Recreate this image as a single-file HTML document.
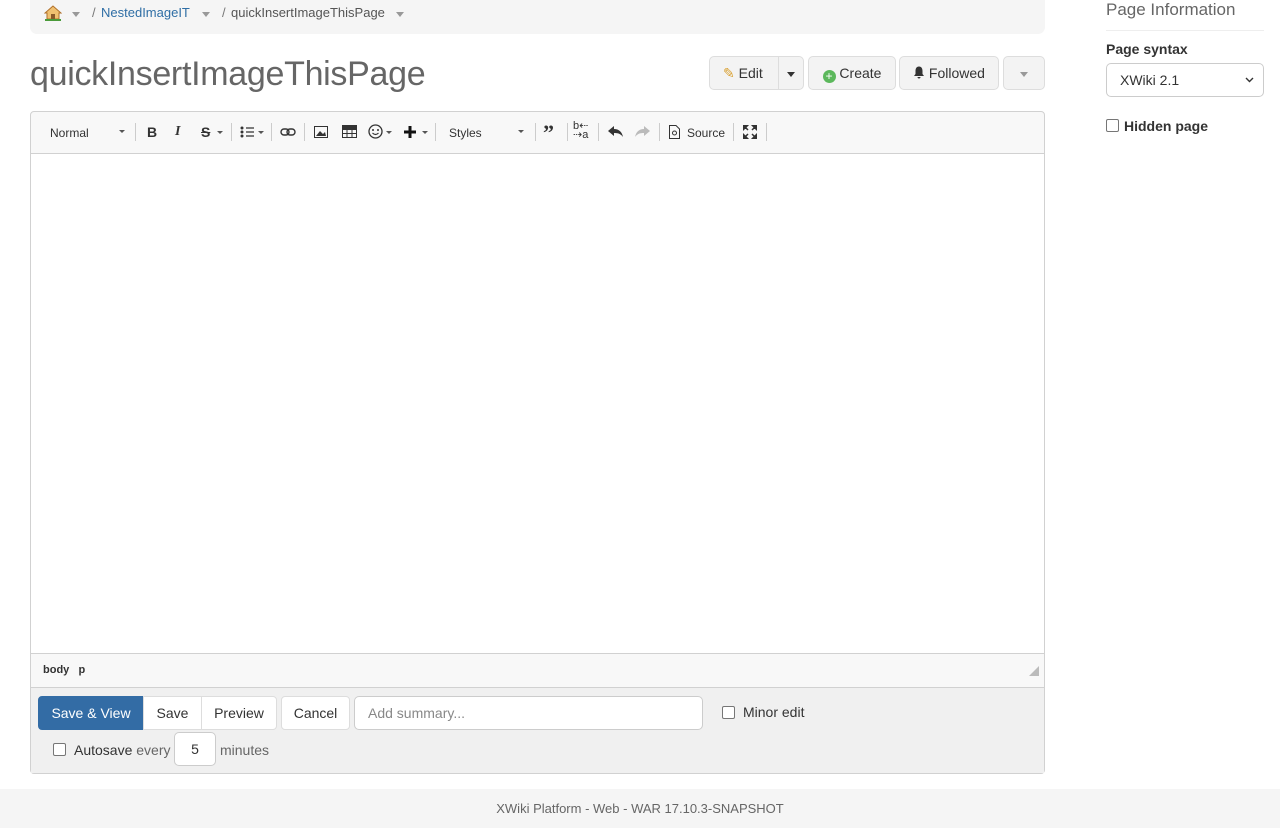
<!DOCTYPE html>
<html><head><meta charset="utf-8"><style>
*{box-sizing:border-box}
body{margin:0;width:1280px;height:828px;background:#fff;font-family:"Liberation Sans",sans-serif;color:#333;position:relative;overflow:hidden}
.a{position:absolute}
.crumb{left:30px;top:-4px;width:1015px;height:38px;background:#f5f5f5;border-radius:0 0 7px 7px;font-size:13px}
.caret{display:inline-block;width:0;height:0;border-left:4px solid transparent;border-right:4px solid transparent;border-top:5px solid #999}
.btn{position:absolute;top:56px;height:34px;border:1px solid #ddd;border-radius:5px;background:#f3f3f3;font-size:14px;line-height:32px;color:#333;text-align:center}
.tb{left:30px;top:111px;width:1015px;height:663px;border:1px solid #d1d1d1;border-radius:4px;background:#f8f8f8}
.sep{position:absolute;top:123px;width:1px;height:18px;background:#ccc}
.ti{position:absolute;top:124px;font-size:14px;color:#333}
.fb{position:absolute;top:696px;height:34px;border:1px solid #ddd;background:#fff;font-size:14px;line-height:32px;text-align:center;color:#333}
.cb{position:absolute;width:13px;height:13px;border:1px solid #767676;border-radius:2px;background:#fff}
</style></head><body>
<div class="a crumb">
 <svg class="a" style="left:14px;top:9px" width="18" height="16" viewBox="0 0 18 16"><path d="M9 1 L1 8 H3 V14 H15 V8 H17 Z" fill="#f0c070" stroke="#b0702a"/><rect x="7" y="9" width="4" height="5" fill="#8a5a2a"/><rect x="1" y="14" width="16" height="2" fill="#4a9a3a"/></svg>
 <span class="a caret" style="left:42px;top:16px"></span>
 <span class="a" style="left:62px;top:9px;color:#777">/</span>
 <span class="a" style="left:71px;top:9px;color:#2f6ea5">NestedImageIT</span>
 <span class="a caret" style="left:172px;top:16px"></span>
 <span class="a" style="left:192px;top:9px;color:#777">/</span>
 <span class="a" style="left:201px;top:9px;color:#555">quickInsertImageThisPage</span>
 <span class="a caret" style="left:366px;top:16px"></span>
</div>
<div class="a" style="left:30px;top:55px;font-size:34px;color:#666;letter-spacing:-0.3px">quickInsertImageThisPage</div>
<div class="btn" style="left:709px;width:95px;text-align:left;padding-left:13px"><span style="color:#d9a030">✎</span> Edit<span class="a" style="left:68px;top:-1px;width:1px;height:34px;background:#ddd"></span><span class="a caret" style="left:77px;top:15px;border-top-color:#333"></span></div>
<div class="btn" style="left:808px;width:88px"><span style="display:inline-block;width:13px;height:13px;border-radius:50%;background:#5cb85c;color:#fff;font-size:12px;line-height:13px;vertical-align:-2px">+</span> Create</div>
<div class="btn" style="left:899px;width:100px"><svg width="12" height="13" viewBox="0 0 12 13" style="vertical-align:-1px"><path d="M6 0.5C3.5 0.5 2.5 2.5 2.5 5V8L1 10H11L9.5 8V5C9.5 2.5 8.5 0.5 6 0.5Z M4.5 11H7.5A1.5 1.5 0 0 1 4.5 11Z" fill="#333"/></svg> Followed</div>
<div class="btn" style="left:1003px;width:42px"><span class="caret" style="vertical-align:middle"></span></div>

<div class="a tb">
 <div class="a" style="left:0;top:41px;width:1013px;height:501px;background:#fff;border-top:1px solid #d1d1d1;border-bottom:1px solid #d1d1d1"></div>
 <div class="a" style="left:0;top:575px;width:1013px;height:86px;background:#f0f0f0;border-top:1px solid #d1d1d1"></div>
 <span class="a" style="left:12px;top:552px;font-size:11px;font-weight:bold">body&nbsp;&nbsp; p</span>
 <span class="a" style="left:998px;top:554px;width:0;height:0;border-left:10px solid transparent;border-bottom:10px solid #bbb"></span>
</div>
<span class="ti" style="left:50px;top:126px;font-size:12px">Normal</span><span class="a caret" style="left:119px;top:130px;border-top-color:#555;border-width:3px 3px 0"></span>
<div class="sep" style="left:135px"></div>
<span class="ti" style="left:147px;font-weight:bold">B</span>
<span class="ti" style="left:175px;font-style:italic;font-family:'Liberation Serif',serif;font-weight:bold">I</span>
<span class="ti" style="left:201px;text-decoration:line-through;font-weight:bold">S</span><span class="a caret" style="left:217px;top:131px;border-top-color:#555;border-width:3px 3px 0"></span>
<div class="sep" style="left:231px"></div>
<svg class="a" style="left:240px;top:126px" width="14" height="12"><circle cx="2" cy="2" r="1.5" fill="#333"/><circle cx="2" cy="6" r="1.5" fill="#333"/><circle cx="2" cy="10" r="1.5" fill="#333"/><path d="M6 2H14M6 6H14M6 10H14" stroke="#333" stroke-width="1.3"/></svg><span class="a caret" style="left:258px;top:131px;border-top-color:#555;border-width:3px 3px 0"></span>
<div class="sep" style="left:271px"></div>
<svg class="a" style="left:280px;top:128px" width="16" height="8"><rect x="1" y="1" width="8" height="6" rx="3" fill="none" stroke="#333" stroke-width="1.4"/><rect x="7" y="1" width="8" height="6" rx="3" fill="none" stroke="#333" stroke-width="1.4"/></svg>
<div class="sep" style="left:304px"></div>
<svg class="a" style="left:314px;top:126px" width="14" height="12"><rect x="0.5" y="0.5" width="13" height="11" fill="none" stroke="#333"/><path d="M2 10 L6 5 L9 8 L11 6 L12 10Z" fill="#333"/></svg>
<svg class="a" style="left:342px;top:125px" width="15" height="13"><rect x="0.5" y="0.5" width="14" height="12" fill="none" stroke="#333"/><path d="M0 4.5H15M0 8.5H15M5 4V13M10 4V13" stroke="#333"/><rect x="0" y="0" width="15" height="4" fill="#333"/></svg>
<svg class="a" style="left:368px;top:124px" width="15" height="15"><circle cx="7.5" cy="7.5" r="6.5" fill="none" stroke="#333" stroke-width="1.3"/><circle cx="5" cy="6" r="1" fill="#333"/><circle cx="10" cy="6" r="1" fill="#333"/><path d="M4.5 9Q7.5 12 10.5 9" fill="none" stroke="#333" stroke-width="1.2"/></svg><span class="a caret" style="left:386px;top:131px;border-top-color:#555;border-width:3px 3px 0"></span>
<svg class="a" style="left:404px;top:126px" width="12" height="12"><path d="M6 0V12M0 6H12" stroke="#111" stroke-width="3"/></svg><span class="a caret" style="left:422px;top:131px;border-top-color:#555;border-width:3px 3px 0"></span>
<div class="sep" style="left:435px"></div>
<span class="ti" style="left:449px;top:126px;font-size:12px">Styles</span><span class="a caret" style="left:518px;top:130px;border-top-color:#555;border-width:3px 3px 0"></span>
<div class="sep" style="left:535px"></div>
<span class="ti" style="left:543px;top:120px;font-size:22px;font-weight:bold;font-family:'Liberation Serif',serif">”</span>
<div class="sep" style="left:567px"></div>
<span class="ti" style="left:573px;top:122px;font-size:11px;line-height:9px">b⇠<br>⇢a</span>
<div class="sep" style="left:598px"></div>
<svg class="a" style="left:608px;top:126px" width="15" height="11"><path d="M0 5L6 0V3C11 3 14 6 15 11C12 7 9 7 6 7V10Z" fill="#333"/></svg>
<svg class="a" style="left:635px;top:126px" width="15" height="11"><path d="M15 5L9 0V3C4 3 1 6 0 11C3 7 6 7 9 7V10Z" fill="#bbb"/></svg>
<div class="sep" style="left:659px"></div>
<svg class="a" style="left:669px;top:125px" width="11" height="14"><path d="M.5 .5H7L10.5 4V13.5H.5Z" fill="none" stroke="#333"/><circle cx="5.5" cy="8" r="2" fill="none" stroke="#333"/></svg>
<span class="ti" style="left:687px;top:126px;font-size:12px">Source</span>
<div class="sep" style="left:733px"></div>
<svg class="a" style="left:743px;top:125px" width="14" height="14"><path d="M0 0H5L0 5Z M14 0V5L9 0Z M0 14V9L5 14Z M14 14H9L14 9Z M2 2L5 5M12 2L9 5M2 12L5 9M12 12L9 9" fill="#333" stroke="#333" stroke-width="1.5"/></svg>
<div class="sep" style="left:766px"></div>

<div class="fb" style="left:38px;width:106px;background:#336ca5;border-color:#336ca5;color:#fff;border-radius:4px 0 0 4px">Save &amp; View</div>
<div class="fb" style="left:143px;width:59px">Save</div>
<div class="fb" style="left:201px;width:76px;border-radius:0 4px 4px 0">Preview</div>
<div class="fb" style="left:281px;width:69px;border-radius:4px">Cancel</div>
<div class="fb" style="left:354px;width:349px;border-radius:5px;text-align:left;padding-left:13px;color:#888;border-color:#ccc">Add summary...</div>
<div class="cb" style="left:722px;top:706px"></div><span class="a" style="left:743px;top:704px;font-size:14px">Minor edit</span>
<div class="cb" style="left:53px;top:743px"></div><span class="a" style="left:74px;top:742px;font-size:14px">Autosave <span style="color:#666">every</span></span>
<div class="fb" style="left:174px;top:732px;width:42px;border-radius:5px;border-color:#ccc">5</div>
<span class="a" style="left:220px;top:742px;font-size:14px;color:#666">minutes</span>

<div class="a" style="left:1106px;top:0;font-size:17px;color:#666">Page Information</div>
<div class="a" style="left:1106px;top:30px;width:158px;height:1px;background:#eee"></div>
<div class="a" style="left:1106px;top:41px;font-size:14px;font-weight:bold">Page syntax</div>
<div class="a" style="left:1106px;top:63px;width:158px;height:34px;border:1px solid #ccc;border-radius:5px;font-size:14px;line-height:32px;padding-left:13px">XWiki 2.1<svg class="a" style="right:9px;top:13px" width="9" height="6"><path d="M1 1L4.5 4.5L8 1" fill="none" stroke="#333" stroke-width="1.4"/></svg></div>
<div class="cb" style="left:1106px;top:119px"></div><span class="a" style="left:1124px;top:118px;font-size:14px;font-weight:bold">Hidden page</span>

<div class="a" style="left:0;top:789px;width:1280px;height:39px;background:#f5f5f5;text-align:center;font-size:13px;line-height:40px;color:#666">XWiki Platform - Web - WAR 17.10.3-SNAPSHOT</div>
</body></html>
